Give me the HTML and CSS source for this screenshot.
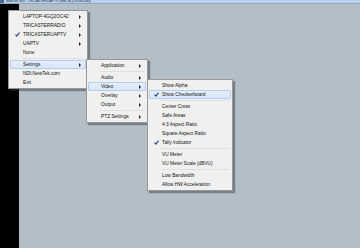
FILE: index.html
```html
<!DOCTYPE html>
<html lang="en">

<head>
    <meta charset="UTF-8">
    <title>NewTek NDI</title>
    <link rel="stylesheet" href="styles.css">
</head>

<body>
    <div class="window">
        <div class="titlebar">
            <span class="app-icon"></span>
            <span class="title">NewTek NDI - TRICASTERUAPTV (Mac B) [1920x1080]</span>
        </div>
        <div class="client">
            <div class="sidebar"></div>
            <div class="viewport"></div>
        </div>

        <!-- source menu -->
        <ul class="menu menu-main">
            <li class="item"><span class="check"></span><span class="label">LAPTOP-4GQ2OC42</span><span class="arrow"></span></li>
            <li class="item"><span class="check"></span><span class="label">TRICASTERRADIO</span><span class="arrow"></span></li>
            <li class="item checked"><span class="check"><svg viewBox="0 0 6 6"><path d="M0.6 3.2 L2.2 4.9 L5.4 0.8" /></svg></span><span class="label">TRICASTERUAPTV</span><span class="arrow"></span></li>
            <li class="item"><span class="check"></span><span class="label">UAPTV</span><span class="arrow"></span></li>
            <li class="item"><span class="check"></span><span class="label">None</span></li>
            <li class="sep"></li>
            <li class="item active"><span class="check"></span><span class="label">Settings</span><span class="arrow"></span></li>
            <li class="item"><span class="check"></span><span class="label">NDI.NewTek.com</span></li>
            <li class="item"><span class="check"></span><span class="label">Exit</span></li>
        </ul>

        <!-- settings submenu -->
        <ul class="menu menu-settings">
            <li class="item"><span class="check"></span><span class="label">Application</span><span class="arrow"></span></li>
            <li class="sep"></li>
            <li class="item"><span class="check"></span><span class="label">Audio</span><span class="arrow"></span></li>
            <li class="item active"><span class="check"></span><span class="label">Video</span><span class="arrow"></span></li>
            <li class="item"><span class="check"></span><span class="label">Overlay</span><span class="arrow"></span></li>
            <li class="item"><span class="check"></span><span class="label">Output</span><span class="arrow"></span></li>
            <li class="sep"></li>
            <li class="item"><span class="check"></span><span class="label">PTZ Settings</span><span class="arrow"></span></li>
        </ul>

        <!-- video submenu -->
        <ul class="menu menu-video">
            <li class="item"><span class="check"></span><span class="label">Show Alpha</span></li>
            <li class="item active"><span class="check"><svg viewBox="0 0 6 6"><path d="M0.6 3.2 L2.2 4.9 L5.4 0.8" /></svg></span><span class="label">Show Checkerboard</span></li>
            <li class="sep"></li>
            <li class="item"><span class="check"></span><span class="label">Center Cross</span></li>
            <li class="item"><span class="check"></span><span class="label">Safe Areas</span></li>
            <li class="item"><span class="check"></span><span class="label">4:3 Aspect Ratio</span></li>
            <li class="item"><span class="check"></span><span class="label">Square Aspect Ratio</span></li>
            <li class="item"><span class="check"><svg viewBox="0 0 6 6"><path d="M0.6 3.2 L2.2 4.9 L5.4 0.8" /></svg></span><span class="label">Tally Indicator</span></li>
            <li class="sep"></li>
            <li class="item"><span class="check"></span><span class="label">VU Meter</span></li>
            <li class="item"><span class="check"></span><span class="label">VU Meter Scale (dBVU)</span></li>
            <li class="sep"></li>
            <li class="item"><span class="check"></span><span class="label">Low Bandwidth</span></li>
            <li class="item"><span class="check"></span><span class="label">Allow HW Acceleration</span></li>
        </ul>
    </div>
</body>

</html>
```

FILE: styles.css
```css
* {
    box-sizing: border-box;
}

body {
    margin: 0;
    padding: 0;
    font-family: "Liberation Sans", Arial, sans-serif;
    background-color: #b4bec6;
}

.window {
    position: relative;
    width: 360px;
    height: 248px;
    overflow: hidden;
    display: flex;
    flex-direction: column;
}

/* thin title bar at the top */
.titlebar {
    height: 4px;
    flex-shrink: 0;
    display: flex;
    align-items: center;
    gap: 2px;
    background-color: #b9d1ea;
    border-bottom: 1px solid #8ea6c0;
}

.app-icon {
    width: 4px;
    height: 3px;
    background-color: #4a6a90;
}

.title {
    font-size: 3.4px;
    line-height: 3px;
    color: #1a2a40;
    white-space: nowrap;
}

.client {
    flex: 1;
    display: flex;
}

.sidebar {
    width: 19px;
    background-color: #000;
}

.viewport {
    flex: 1;
    background-color: #b4bec6;
}

/* context menus */
.menu {
    position: absolute;
    margin: 0;
    padding: 1px 0;
    list-style: none;
    background-color: #f0f0f0;
    border: 1px solid #979797;
    box-shadow: 2px 2px 1px rgba(40, 50, 60, 0.45);
}

.menu-main {
    left: 8px;
    top: 10px;
    width: 80px;
}

.menu-settings {
    left: 86px;
    top: 59px;
    width: 62px;
}

.menu-video {
    left: 147px;
    top: 79px;
    width: 86px;
}

.item {
    height: 9px;
    margin: 0 1px;
    display: flex;
    align-items: center;
    font-size: 4.8px;
    color: #111;
    border: 1px solid transparent;
    border-radius: 1px;
    white-space: nowrap;
}

.item.active {
    background: linear-gradient(#e6effb, #d8e6f8);
    border-color: #b4cdee;
}

.check {
    width: 12px;
    height: 7px;
    flex-shrink: 0;
    display: flex;
    align-items: center;
    justify-content: center;
}

.check svg {
    width: 5px;
    height: 5px;
    fill: none;
    stroke: #29418a;
    stroke-width: 1.3;
}

.label {
    flex: 1;
}

.arrow {
    width: 0;
    height: 0;
    margin-right: 4px;
    border-top: 2px solid transparent;
    border-bottom: 2px solid transparent;
    border-left: 2px solid #222;
}

.sep {
    height: 3px;
    margin-left: 13px;
    margin-right: 2px;
    display: flex;
    align-items: center;
}

.sep::before {
    content: "";
    flex: 1;
    height: 0;
    border-top: 1px solid #e0e0e0;
}
```
